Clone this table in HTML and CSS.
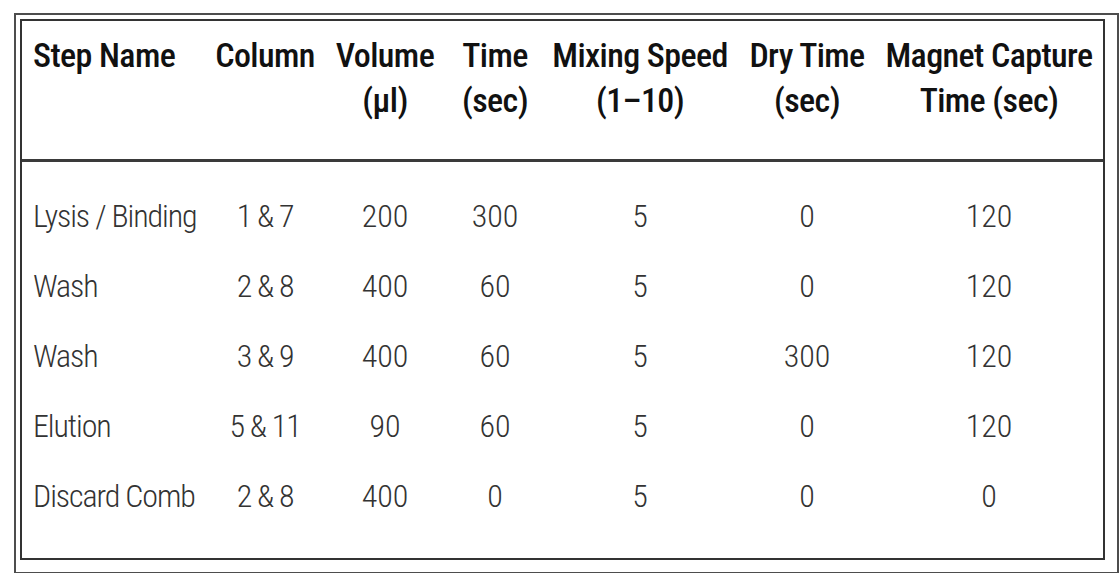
FILE: index.html
```html
<!DOCTYPE html>
<html lang="en">
<head>
<meta charset="utf-8">
<title>Protocol Steps</title>
<link rel="stylesheet" href="styles.css">
</head>
<body>
<div class="frame">
  <div class="inner">
    <table class="steps">
      <colgroup>
        <col class="c-name">
        <col class="c-col">
        <col class="c-vol">
        <col class="c-time">
        <col class="c-mix">
        <col class="c-dry">
        <col class="c-mag">
      </colgroup>
      <thead>
        <tr>
          <th class="name">Step Name</th>
          <th>Column</th>
          <th>Volume<br>(µl)</th>
          <th>Time<br>(sec)</th>
          <th>Mixing Speed<br>(1–10)</th>
          <th>Dry Time<br>(sec)</th>
          <th class="mag">Magnet Capture<br>Time (sec)</th>
        </tr>
      </thead>
      <tbody>
        <tr class="first">
          <td class="name">Lysis / Binding</td><td class="pair">1 &amp; 7</td><td>200</td><td>300</td><td>5</td><td>0</td><td class="mag">120</td>
        </tr>
        <tr>
          <td class="name">Wash</td><td class="pair">2 &amp; 8</td><td>400</td><td>60</td><td>5</td><td>0</td><td class="mag">120</td>
        </tr>
        <tr>
          <td class="name">Wash</td><td class="pair">3 &amp; 9</td><td>400</td><td>60</td><td>5</td><td>300</td><td class="mag">120</td>
        </tr>
        <tr>
          <td class="name">Elution</td><td class="pair">5 &amp; 11</td><td>90</td><td>60</td><td>5</td><td>0</td><td class="mag">120</td>
        </tr>
        <tr>
          <td class="name">Discard Comb</td><td class="pair">2 &amp; 8</td><td>400</td><td>0</td><td>5</td><td>0</td><td class="mag">0</td>
        </tr>
      </tbody>
    </table>
  </div>
</div>
</body>
</html>
```
FILE: styles.css
```css
html, body {
  margin: 0;
  padding: 0;
  background: #ffffff;
}
body {
  padding: 13px 0 0 14px;
  font-family: "Roboto Condensed", "Liberation Sans Narrow", "DejaVu Sans Condensed", Roboto, sans-serif;
}
.frame {
  width: 1093px;
  height: 549px;
  border: 2px solid #4d4d4d;
  padding: 4px;
  box-sizing: content-box;
}
.inner {
  box-sizing: border-box;
  width: 1085px;
  height: 541px;
  border: 2px solid #333333;
}
.steps {
  width: 100%;
  border-collapse: collapse;
  table-layout: fixed;
}
.c-name { width: 183px; }
.c-col { width: 120px; }
.c-vol { width: 120px; }
.c-time { width: 100px; }
.c-mix { width: 190px; }
.c-dry { width: 144px; }
.steps th {
  font-weight: 500;
  font-size: 34px;
  letter-spacing: -0.6px;
  line-height: 45px;
  color: #111111;
  text-align: center;
  vertical-align: top;
  padding: 12px 0 0 0;
  height: 126px;
  border-bottom: 3px solid #3a3a3a;
  white-space: nowrap;
}
.steps td {
  font-weight: 300;
  font-size: 32px;
  line-height: 70px;
  height: 70px;
  padding: 0;
  color: #333333;
  text-align: center;
  white-space: nowrap;
}
.steps .name {
  text-align: left;
  padding-left: 11px;
}
.steps td.name {
  letter-spacing: -1.1px;
}
.steps td.pair {
  letter-spacing: -1.2px;
}
.steps .mag {
  padding-right: 4px;
}
.steps tr.first td {
  padding-top: 19px;
}
```
